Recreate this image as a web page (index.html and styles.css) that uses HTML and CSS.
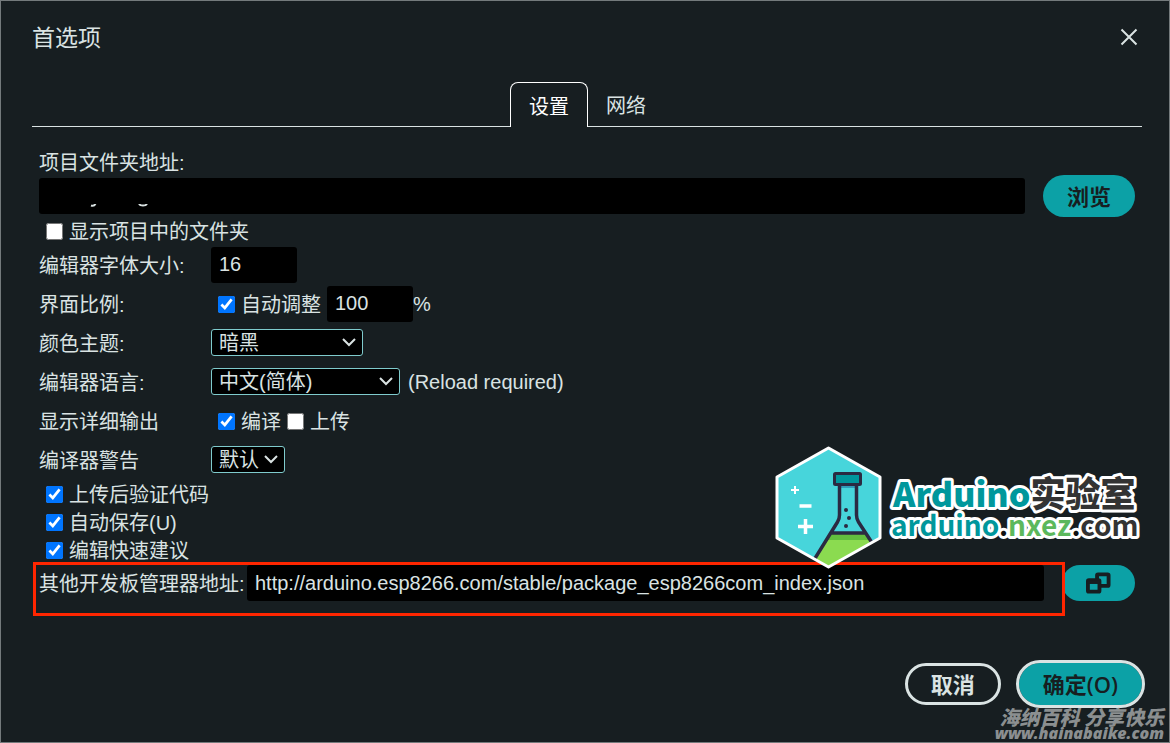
FILE: index.html
```html
<!DOCTYPE html>
<html lang="zh-CN">
  <head>
    <meta charset="utf-8">
    <title>首选项</title>
    <link rel="stylesheet" href="styles.css">
  </head>
  <body>
    <form class="dialog">
      <header class="dialog-header">
        <h1>首选项</h1>
        <button type="button" class="close" aria-label="关闭">
          <svg width="18" height="18" viewBox="0 0 18 18"><path d="M1.5 1.5l15 15M16.5 1.5l-15 15"/></svg>
        </button>
      </header>

      <nav class="tabs">
        <button type="button" class="tab active">设置</button>
        <button type="button" class="tab">网络</button>
      </nav>

      <div class="panel">
        <label class="path-label" for="sketchbook">项目文件夹地址:</label>
        <div class="path-row">
          <span class="path-field">
            <input type="text" id="sketchbook" class="field">
            <svg class="path-rest" width="60" height="6" viewBox="0 0 60 6"><path d="M2 1.500q3 1 4.500-1.500M50 0q1 1.500 4 1.500t4-1.500"/></svg>
          </span>
          <button type="button" class="button">浏览</button>
        </div>
        <label class="check"><input type="checkbox">显示项目中的文件夹</label>

        <div class="row">
          <label class="name" for="font-size">编辑器字体大小:</label>
          <input type="text" id="font-size" class="field number" value="16">
        </div>
        <div class="row">
          <label class="name" for="scale">界面比例:</label>
          <label class="check"><input type="checkbox" checked>自动调整</label>
          <input type="text" id="scale" class="field number" value="100"><span>%</span>
        </div>
        <div class="row">
          <label class="name" for="theme">颜色主题:</label>
          <span class="select theme">
            <select id="theme"><option>暗黑</option></select>
            <svg width="14" height="9" viewBox="0 0 14 9"><path d="M1 1l6 6 6-6"/></svg>
          </span>
        </div>
        <div class="row">
          <label class="name" for="language">编辑器语言:</label>
          <span class="select language">
            <select id="language"><option>中文(简体)</option></select>
            <svg width="14" height="9" viewBox="0 0 14 9"><path d="M1 1l6 6 6-6"/></svg>
          </span>
          <span class="note">(Reload required)</span>
        </div>
        <div class="row">
          <span class="name">显示详细输出</span>
          <label class="check"><input type="checkbox" checked>编译</label>
          <label class="check"><input type="checkbox">上传</label>
        </div>
        <div class="row">
          <label class="name" for="warnings">编译器警告</label>
          <span class="select warnings">
            <select id="warnings"><option>默认</option></select>
            <svg width="14" height="9" viewBox="0 0 14 9"><path d="M1 1l6 6 6-6"/></svg>
          </span>
        </div>

        <div class="options">
          <label class="check"><input type="checkbox" checked>上传后验证代码</label>
          <label class="check"><input type="checkbox" checked>自动保存(U)</label>
          <label class="check"><input type="checkbox" checked>编辑快速建议</label>
        </div>

        <div class="urls-row">
          <label class="urls-label" for="urls">其他开发板管理器地址:</label>
          <input type="text" id="urls" class="field" value="http://arduino.esp8266.com/stable/package_esp8266com_index.json">
          <button type="button" class="button expand" aria-label="编辑地址">
            <svg width="26" height="22" viewBox="0 0 26 22">
              <rect x="11.500" y="2" width="12" height="12" rx="1"/>
              <rect class="front" x="2" y="8" width="12" height="12" rx="1"/>
              <path d="M2 10h12"/>
            </svg>
          </button>
          <div class="highlight"></div>
        </div>
      </div>

      <footer class="actions">
        <button type="button" class="button secondary">取消</button>
        <button type="submit" class="button primary">确定(O)</button>
      </footer>

      <svg class="logo" width="370" height="128" viewBox="0 0 370 128">
        <defs>
          <clipPath id="hex"><path d="M55.500 6L107 35v61L55.500 125 4 96V35z"/></clipPath>
        </defs>
        <g clip-path="url(#hex)">
          <path fill="#47d5db" d="M0 0h112v128H0z"/>
          <path fill="#8bdb50" d="M57 91h37l20 37H34z"/>
          <path fill="#62bf3e" d="M57 91h36l4 7H53z"/>
          <path fill="#2f9dba" d="M67 40h16v6H67z"/>
          <path fill="none" stroke="#2b2a42" stroke-width="3.500" d="M66.500 40v33q0 4-2 7L36 126M83.500 40v33q0 4 2 7l26 40M57 91h36"/>
        </g>
        <rect x="61.500" y="31.500" width="26" height="11" rx="1" fill="#00979c" stroke="#2b2a42" stroke-width="3"/>
        <g fill="#2b2a42"><circle cx="73" cy="68" r="2"/><circle cx="76" cy="76" r="2"/><circle cx="73" cy="84" r="2"/></g>
        <path fill="none" stroke="#fff" stroke-width="3" stroke-linejoin="round" d="M55.500 6L107 35v61L55.500 125 4 96V35z"/>
        <path fill="none" stroke="#fff" stroke-width="2" d="M18 48h8M22 44v8"/>
        <path fill="none" stroke="#fff" stroke-width="3.500" d="M26.500 64h12M25 84.500h15M32.500 77v15"/>
        <text class="logo-title" x="120" y="65"><tspan fill="#00979c">Arduino</tspan><tspan class="logo-lab" fill="#333">实验室</tspan></text>
        <text class="logo-url" x="118" y="94"><tspan fill="#00979c">arduino</tspan><tspan fill="#111">.</tspan><tspan fill="#5cb85c">nxez</tspan><tspan fill="#111">.</tspan><tspan fill="#333">com</tspan></text>
      </svg>

      <div class="watermark">
        <div class="watermark-name">海纳百科 分享快乐</div>
        <div class="watermark-url">www.hainabaike.com</div>
      </div>
    </form>
  </body>
</html>
```

FILE: styles.css
```css
* {
  box-sizing: border-box;
}
body {
  margin: 0;
  background: #171e21;
  color: #dae3e3;
  font-family: "Liberation Sans", "Noto Sans CJK SC", sans-serif;
  font-size: 20px;
  line-height: 26px;
}
button, input, select {
  margin: 0;
  font: inherit;
  color: inherit;
}
.dialog {
  position: relative;
  min-height: 100vh;
  padding: 0 27px 0 31px;
  border: 1px solid #747a7c;
}

.dialog-header {
  display: flex;
  justify-content: space-between;
  align-items: center;
  height: 72px;
}
h1 {
  margin: 0;
  padding-top: 2px;
  font-size: 23px;
  font-weight: normal;
}
.close {
  display: flex;
  padding: 0;
  margin-right: 4px;
  border: 0;
  background: none;
}
.close path {
  stroke: #dae3e3;
  stroke-width: 2;
}

.tabs {
  display: flex;
  justify-content: center;
  height: 54px;
  padding-top: 9px;
  border-bottom: 1px solid #dae3e3;
}
.tab {
  height: 45px;
  padding: 3px 18px 0;
  border: 0;
  background: none;
}
.tab.active {
  border: 1px solid #fff;
  border-bottom: 0;
  border-radius: 8px 8px 0 0;
  background: #171e21;
  color: #fff;
}

.panel {
  padding: 21px 7px 0;
}
.path-label {
  display: block;
  height: 27px;
  padding-top: 2px;
}
.path-row {
  display: flex;
  align-items: center;
  gap: 18px;
}
.path-field {
  position: relative;
  display: flex;
  flex: 1;
}
.path-rest {
  position: absolute;
  left: 50px;
  top: 26px;
  fill: none;
  stroke: #dae3e3;
  stroke-width: 2;
}
.field {
  height: 36px;
  min-width: 0;
  padding: 0 8px;
  border: 0;
  border-radius: 3px;
  background: #000;
}
.path-field .field {
  flex: 1;
}
.number {
  width: 86px;
}

.check {
  display: flex;
  align-items: center;
  height: 28px;
  padding: 2px 0 0 7px;
}
.check input {
  width: 17px;
  height: 17px;
  margin: 0 6px 1px 0;
  accent-color: #0075ff;
}
.row {
  display: flex;
  align-items: center;
  height: 39px;
}
.name {
  width: 172px;
  padding-top: 2px;
}
.row .check + .field {
  margin-left: 6px;
}
.row .check + .check {
  padding-left: 6px;
}
.note {
  margin-left: 8px;
}
.options {
  padding: 1px 0;
}

.select {
  position: relative;
  display: flex;
}
.select select {
  width: 100%;
  height: 27px;
  padding: 0 7px;
  border: 1px solid #7fcbcd;
  border-radius: 3px;
  background: #000;
  appearance: none;
}
.select svg {
  position: absolute;
  right: 7px;
  top: 9px;
  fill: none;
  stroke: #dae3e3;
  stroke-width: 2;
  pointer-events: none;
}
.theme {
  width: 152px;
}
.language {
  width: 189px;
}
.warnings {
  width: 74px;
}

.urls-row {
  position: relative;
  display: flex;
  align-items: center;
}
.urls-label {
  width: 208px;
  padding-top: 2px;
  white-space: nowrap;
}
.urls-row .field {
  flex: 1;
  margin-right: 18px;
}
.highlight {
  position: absolute;
  left: -6px;
  right: 70px;
  top: -3px;
  height: 54px;
  border: 3px solid #ff2600;
  pointer-events: none;
}

.button {
  height: 42px;
  padding: 0 24px;
  border: 0;
  border-radius: 21px;
  background: #0ca1a6;
  color: #171e21;
  font-family: "Open Sans", "Noto Sans CJK SC", sans-serif;
  font-size: 22px;
  font-weight: 600;
}
.expand {
  display: flex;
  justify-content: center;
  align-items: center;
  width: 73px;
  height: 36px;
}
.expand svg {
  fill: none;
  stroke: #171e21;
  stroke-width: 4;
}
.expand .front {
  fill: #0ca1a6;
}
.actions {
  display: flex;
  justify-content: flex-end;
  gap: 18px;
  margin-top: 62px;
}
.secondary {
  padding: 0 23px;
  border: 3px solid #dae3e3;
  background: none;
  color: #dae3e3;
  font-weight: bold;
}
.primary {
  outline: 3px solid #dae3e3;
}

.logo {
  position: absolute;
  right: 26px;
  top: 441px;
}
.logo text {
  font-family: "Noto Sans CJK SC", sans-serif;
  font-weight: 900;
  stroke: #fff;
  stroke-width: 6px;
  stroke-linejoin: round;
  paint-order: stroke;
}
.logo-title {
  font-size: 34px;
}
.logo-lab {
  font-size: 35px;
}
.logo .logo-url {
  font-size: 28px;
  font-weight: bold;
}
.watermark {
  position: absolute;
  right: 5px;
  bottom: 1px;
  color: #8b8f90;
  font-style: italic;
  font-weight: 900;
  text-align: right;
  white-space: nowrap;
}
.watermark-name {
  font-family: "Noto Sans CJK SC", sans-serif;
  font-size: 20px;
  line-height: 18px;
}
.watermark-url {
  font-family: "Noto Sans", sans-serif;
  font-size: 16px;
  line-height: 15px;
}
```
